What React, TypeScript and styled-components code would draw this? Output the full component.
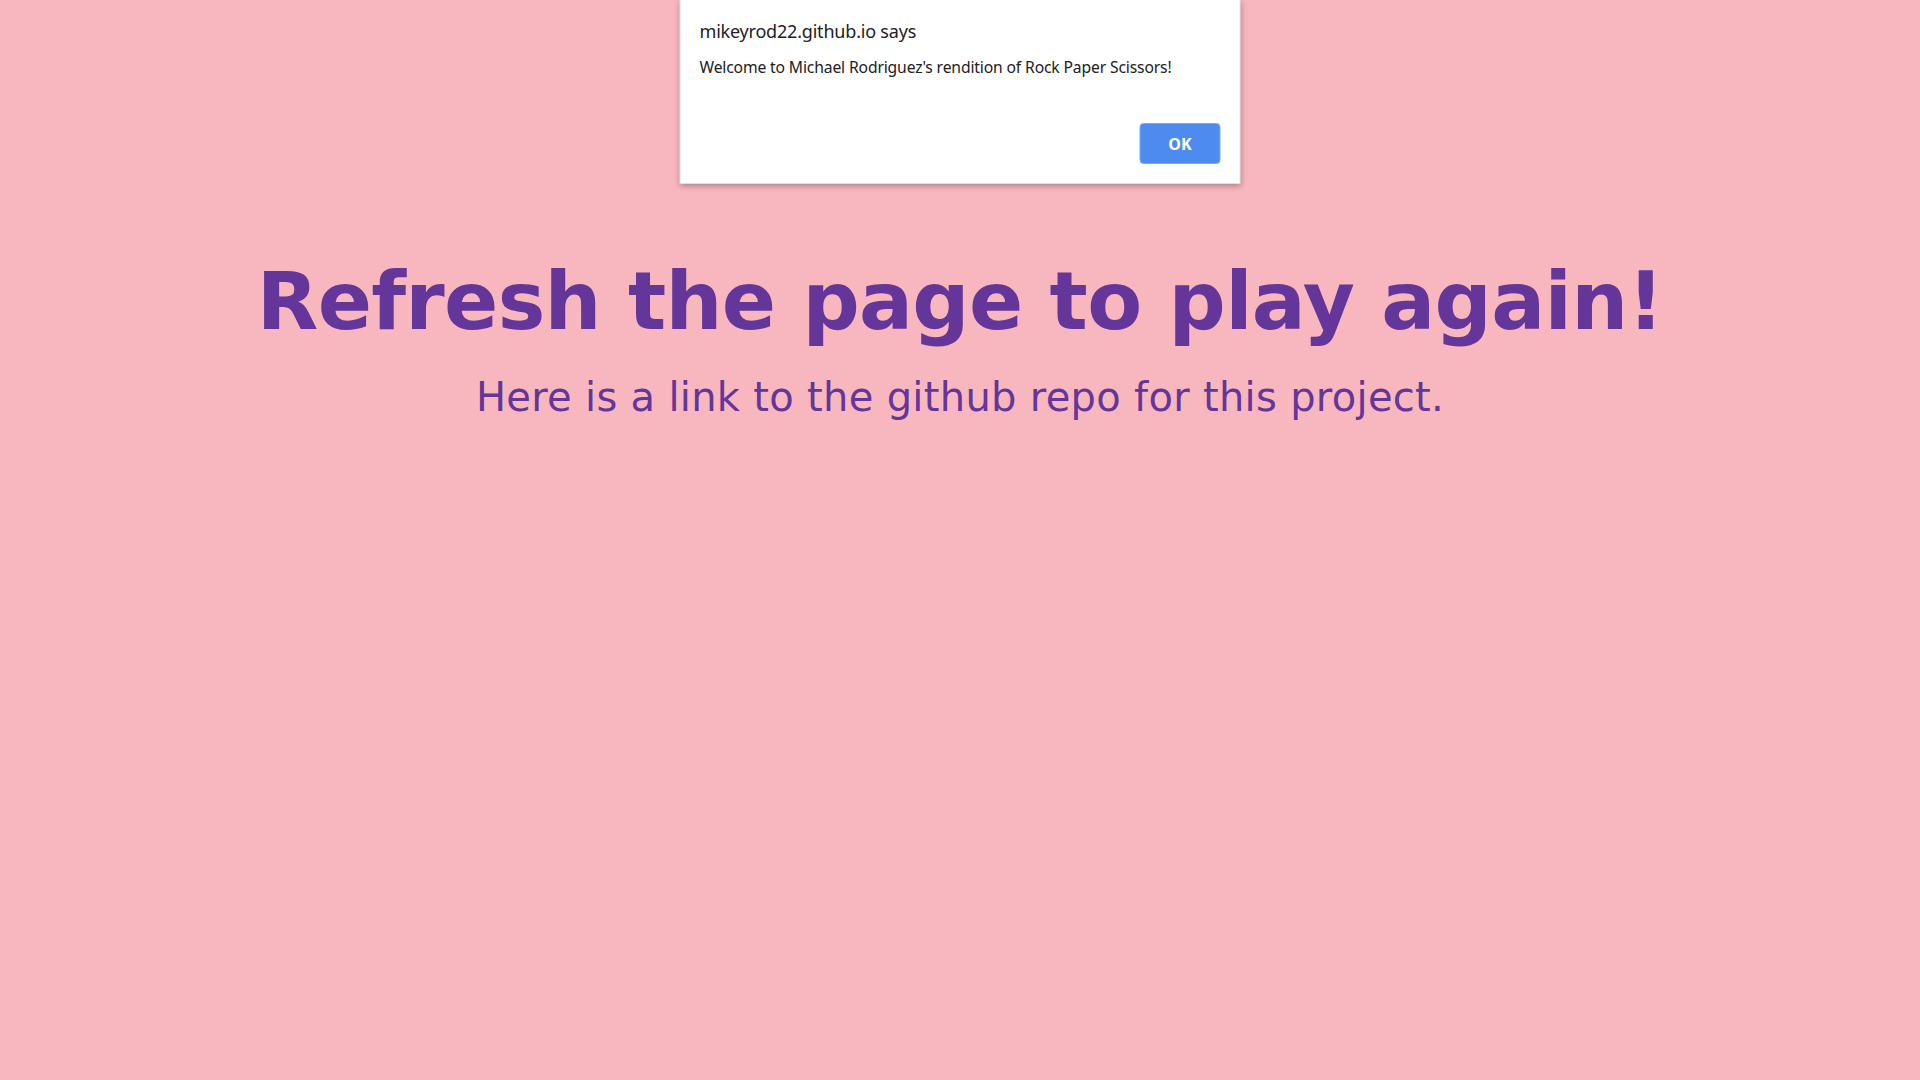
import React from "react";
import styled, { createGlobalStyle } from "styled-components";

const GlobalStyle = createGlobalStyle`
  html, body {
    margin: 0;
    padding: 0;
    background: #f8b7bf;
  }
  body {
    min-height: 1080px;
    font-family: "DejaVu Sans", Verdana, sans-serif;
  }
`;

const Page = styled.main`
  position: relative;
  min-height: 1080px;
  padding-top: 255px;
  box-sizing: border-box;
  text-align: center;
  color: #643699;
`;

const Heading = styled.h1`
  margin: 0;
  font-family: "DejaVu Sans", Verdana, sans-serif;
  font-weight: bold;
  font-size: 80px;
  line-height: 93px;
  letter-spacing: -0.7px;
`;

const Sub = styled.p`
  margin: 26px 0 0;
  font-family: "DejaVu Sans", Verdana, sans-serif;
  font-weight: normal;
  font-size: 40px;
  line-height: 47px;
  letter-spacing: 0.3px;
`;

const Dialog = styled.div`
  position: absolute;
  top: 0;
  left: 50%;
  transform: translateX(-50%);
  width: 561px;
  height: 184px;
  box-sizing: border-box;
  background: #ffffff;
  border: 1px solid rgba(0, 0, 0, 0.12);
  border-top: none;
  box-shadow: 0 2px 6px rgba(0, 0, 0, 0.3);
  padding: 19px 19px 19px 19px;
  display: flex;
  flex-direction: column;
  text-align: left;
  font-family: "Noto Sans", "Open Sans", sans-serif;
  color: #202124;
`;

const DialogTitle = styled.div`
  font-size: 18px;
  line-height: 24px;
  letter-spacing: -0.2px;
`;

const DialogMessage = styled.div`
  margin-top: 14px;
  font-size: 15.7px;
  line-height: 21px;
  letter-spacing: -0.15px;
`;

const Actions = styled.div`
  margin-top: auto;
  display: flex;
  justify-content: flex-end;
`;

const OkButton = styled.button`
  width: 81px;
  height: 41px;
  border: 1px solid #7aa9f3;
  border-radius: 4px;
  background: #4d8bf0;
  color: #ffffff;
  font-family: "Noto Sans", "Open Sans", sans-serif;
  font-weight: bold;
  font-size: 16px;
  cursor: pointer;
`;

export default function App() {
  return (
    <>
      <GlobalStyle />
      <Page>
        <Heading>Refresh the page to play again!</Heading>
        <Sub>Here is a link to the github repo for this project.</Sub>
        <Dialog role="alertdialog">
          <DialogTitle>mikeyrod22.github.io says</DialogTitle>
          <DialogMessage>
            Welcome to Michael Rodriguez's rendition of Rock Paper Scissors!
          </DialogMessage>
          <Actions>
            <OkButton>OK</OkButton>
          </Actions>
        </Dialog>
      </Page>
    </>
  );
}
